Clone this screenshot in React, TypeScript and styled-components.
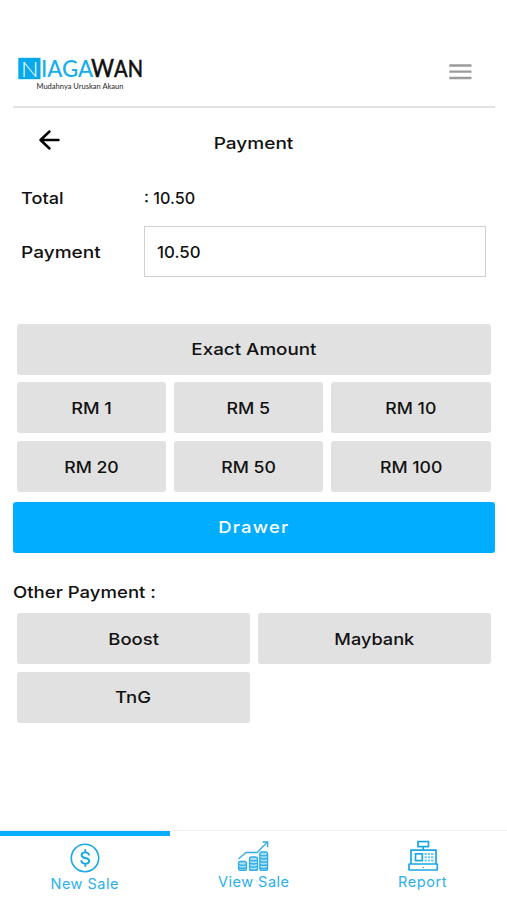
import React from 'react';
import styled, { createGlobalStyle } from 'styled-components';

const GlobalStyle = createGlobalStyle`
  * { box-sizing: border-box; }
  body { margin: 0; background: #fff; color: #111; font-family: Inter, sans-serif; }
  button, input { font: inherit; color: inherit; }
`;

const Screen = styled.div`
  display: flex;
  flex-direction: column;
  width: 507px;
  height: 900px;
  overflow: hidden;
  background: #fff;
  font-size: 16.5px;
  font-weight: 450;
  line-height: 20px;
`;

const Header = styled.header`
  display: flex;
  align-items: flex-start;
  justify-content: space-between;
  height: 107.5px;
  margin: 0 12.5px 0 13px;
  padding: 44px 22.5px 0 4px;
  border-bottom: 2px solid #e2e2e2;
`;

const IconButton = styled.button`
  display: flex;
  padding: 0;
  border: 0;
  background: none;
`;

const MenuButton = styled(IconButton)`
  margin-top: 19px;
`;

const TitleBar = styled.div`
  display: grid;
  grid-template-columns: 60px 1fr 60px;
  align-items: start;
  height: 71.5px;
  padding: 21.5px 0 0;
  text-align: center;
`;

const BackButton = styled(IconButton)`
  justify-content: flex-end;
`;

const Title = styled.h1`
  margin: 4px 0 0;
  font: inherit;
`;

const Label = styled.span<{ $stretch: number; $origin?: 'left' | 'center'; $tracking?: number }>`
  display: inline-block;
  white-space: pre;
  letter-spacing: ${p => p.$tracking ?? 0}px;
  transform: scaleX(${p => p.$stretch});
  transform-origin: ${p => p.$origin ?? 'center'};
`;

const Form = styled.div`
  display: grid;
  grid-template-columns: 123px 1fr;
  grid-template-rows: 38px 51px;
  row-gap: 9px;
  align-items: center;
  margin: 0 20.8px 0 20.9px;
`;

const AmountBox = styled.div`
  display: flex;
  align-items: center;
  height: 51px;
  padding: 0 12px;
  border: 1px solid #d0d0d0;
`;

const Keypad = styled.div<{ $columns: string }>`
  display: grid;
  grid-template-columns: ${p => p.$columns};
  grid-auto-rows: 51.3px;
  gap: 7.4px;
  margin: 0 16px 0 16.8px;
`;

const Key = styled.button<{ $wide?: boolean }>`
  grid-column: ${p => (p.$wide ? '1 / -1' : 'auto')};
  padding: 0;
  border: 0;
  border-radius: 3px;
  background: #e1e1e1;
`;

const DrawerButton = styled.button`
  height: 51.3px;
  margin: 9.6px 12.5px 0 13px;
  padding: 0;
  border: 0;
  border-radius: 3px;
  background: #00adff;
  color: #fff;
  font-weight: 500;
`;

const SectionLabel = styled.div`
  margin: 29px 13px 11px;
`;

const TabBar = styled.nav`
  display: grid;
  grid-template-columns: 169.5px 1fr 169px;
  height: 70px;
  margin-top: auto;
  border-top: 1px solid #eee;
  font-size: 14.5px;
  font-weight: 400;
  line-height: 16px;
`;

const Tab = styled.a<{ $active?: boolean }>`
  display: flex;
  flex-direction: column;
  align-items: center;
  color: #2cb0ec;
  border-top: ${p => (p.$active ? '5px solid #08adff' : '0')};
  padding-top: ${p => (p.$active ? '7px' : '9px')};
  gap: 3px;
`;

const Spacer = styled.div`
  height: 46.5px;
`;

const Logo = () => (
  <svg width="132" height="54" viewBox="17 44 132 54" fontFamily="Lato, sans-serif">
    <rect x="18.3" y="57.8" width="22.2" height="21.4" fill="#08a9ec" />
    <text x="21" y="76.800" fontSize="22" fontWeight="300" textLength="17.500" lengthAdjust="spacingAndGlyphs" fill="#fff">N</text>
    <text x="41" y="77.2" fontSize="22.5" textLength="52" lengthAdjust="spacingAndGlyphs" fill="#16aeee">IAGA</text>
    <text x="91" y="77.2" fontSize="22.5" textLength="52" lengthAdjust="spacingAndGlyphs" fill="#111" stroke="#111" strokeWidth=".4"><tspan fontSize="25">W</tspan>AN</text>
    <text x="36.5" y="89" fontSize="7" textLength="87" lengthAdjust="spacingAndGlyphs" fill="#333">Mudahnya Uruskan Akaun</text>
  </svg>
);

const MenuIcon = () => (
  <svg width="23" height="18" viewBox="0 0 23 18" stroke="#9b9b9b" strokeWidth="2.3">
    <path d="M.3 2.5h22.2M.3 8.7h22.2M.3 15h22.2" />
  </svg>
);

const BackIcon = () => (
  <svg width="22" height="22" viewBox="0 0 22 22" fill="none" stroke="#050505" strokeWidth="2.5" strokeLinecap="round" strokeLinejoin="round">
    <path d="M20.5 11H2.500M11.500 2.500 2.500 11l9 8.500" />
  </svg>
);

const CoinIcon = () => (
  <svg width="30" height="30" viewBox="0 0 30 30" fill="none" stroke="#18a8e4" strokeWidth="1.6" strokeLinecap="round">
    <circle cx="15" cy="15" r="13.7" />
    <path strokeWidth="1.9" d="M15.3 7v2.4M15.3 20.6V23M19 11.8c-.5-1.6-1.8-2.4-3.7-2.4-2.2 0-3.7 1-3.7 2.8 0 1.7 1.3 2.3 3.7 2.8s3.9 1.2 3.9 2.9-1.6 2.7-3.9 2.7c-2.1 0-3.5-.9-4-2.6" />
  </svg>
);

const Stack = ({ x, top, count, w }: { x: number; top: number; count: number; w: number }) => (
  <g>
    <rect x={x} y={top} width={w} height={30.5 - top} rx="2" fill="#a9dff7" />
    {Array.from({ length: count }, (_, i) => (
      <path key={i} d={`M${x} ${top + 3 + i * 3.2}q${w / 2} 1.6 ${w} 0`} />
    ))}
  </g>
);

const GrowthIcon = () => (
  <svg width="33" height="31" viewBox="0 0 33 31" fill="none" stroke="#31ade5" strokeWidth="1.3">
    <Stack x={1.5} top={21.5} count={2} w={8} />
    <Stack x={12.5} top={17} count={4} w={8} />
    <Stack x={22.8} top={12} count={5} w={7.8} />
    <path d="M1.5 19 9 12.5h11L30 2.5M25.5 2h5.2v5.3" />
  </svg>
);

const RegisterIcon = () => (
  <svg width="32" height="31" viewBox="0 0 32 31" fill="none" stroke="#18a8e4" strokeWidth="1.7">
    <rect x="11" y="1.6" width="10.5" height="5" />
    <path d="M16.2 7v3M4 24V10.2h25V24" />
    <rect x="2" y="24" width="28.3" height="6" rx=".5" />
    <rect x="8.5" y="13.8" width="6.8" height="6.8" />
    <path d="M15.5 27.5h1.5" strokeWidth="1" />
    <path d="M17.5 14h9M17.5 17.3h9M17.5 20.5h9" strokeWidth="2" stroke="#6cc9ee" strokeDasharray="2.3 1" />
  </svg>
);

const cash: [string, number][] = [
  ['RM 1', 1.1], ['RM 5', 1.08], ['RM 10', 1.07],
  ['RM 20', 1.07], ['RM 50', 1.07], ['RM 100', 1.07],
];
const wallets: [string, number][] = [['Boost', 1.12], ['Maybank', 1.1], ['TnG', 1.12]];

export default function App() {
  return (
    <Screen>
      <GlobalStyle />
      <Header>
        <Logo />
        <MenuButton aria-label="Menu"><MenuIcon /></MenuButton>
      </Header>
      <TitleBar>
        <BackButton aria-label="Back"><BackIcon /></BackButton>
        <Title><Label $stretch={1.155}>Payment</Label></Title>
      </TitleBar>
      <Form>
        <Label $stretch={1.1} $origin="left">Total</Label>
        <Label $stretch={0.98} $origin="left">: 10.50</Label>
        <Label $stretch={1.155} $origin="left">Payment</Label>
        <AmountBox><Label $stretch={1.02} $origin="left">10.50</Label></AmountBox>
      </Form>
      <Spacer />
      <Keypad $columns="149.6px 149.6px 1fr">
        <Key $wide><Label $stretch={1.14}>Exact Amount</Label></Key>
        {cash.map(([name, stretch]) => (
          <Key key={name}><Label $stretch={stretch}>{name}</Label></Key>
        ))}
      </Keypad>
      <DrawerButton><Label $stretch={1.12} $tracking={1.1}>Drawer</Label></DrawerButton>
      <SectionLabel><Label $stretch={1.125} $origin="left">Other Payment :</Label></SectionLabel>
      <Keypad $columns="1fr 1fr">
        {wallets.map(([name, stretch]) => (
          <Key key={name}><Label $stretch={stretch}>{name}</Label></Key>
        ))}
      </Keypad>
      <TabBar>
        <Tab $active><CoinIcon /><Label $stretch={1} $tracking={0.5}>New Sale</Label></Tab>
        <Tab><GrowthIcon /><Label $stretch={1} $tracking={0.5}>View Sale</Label></Tab>
        <Tab><RegisterIcon /><Label $stretch={1} $tracking={0.6}>Report</Label></Tab>
      </TabBar>
    </Screen>
  );
}
